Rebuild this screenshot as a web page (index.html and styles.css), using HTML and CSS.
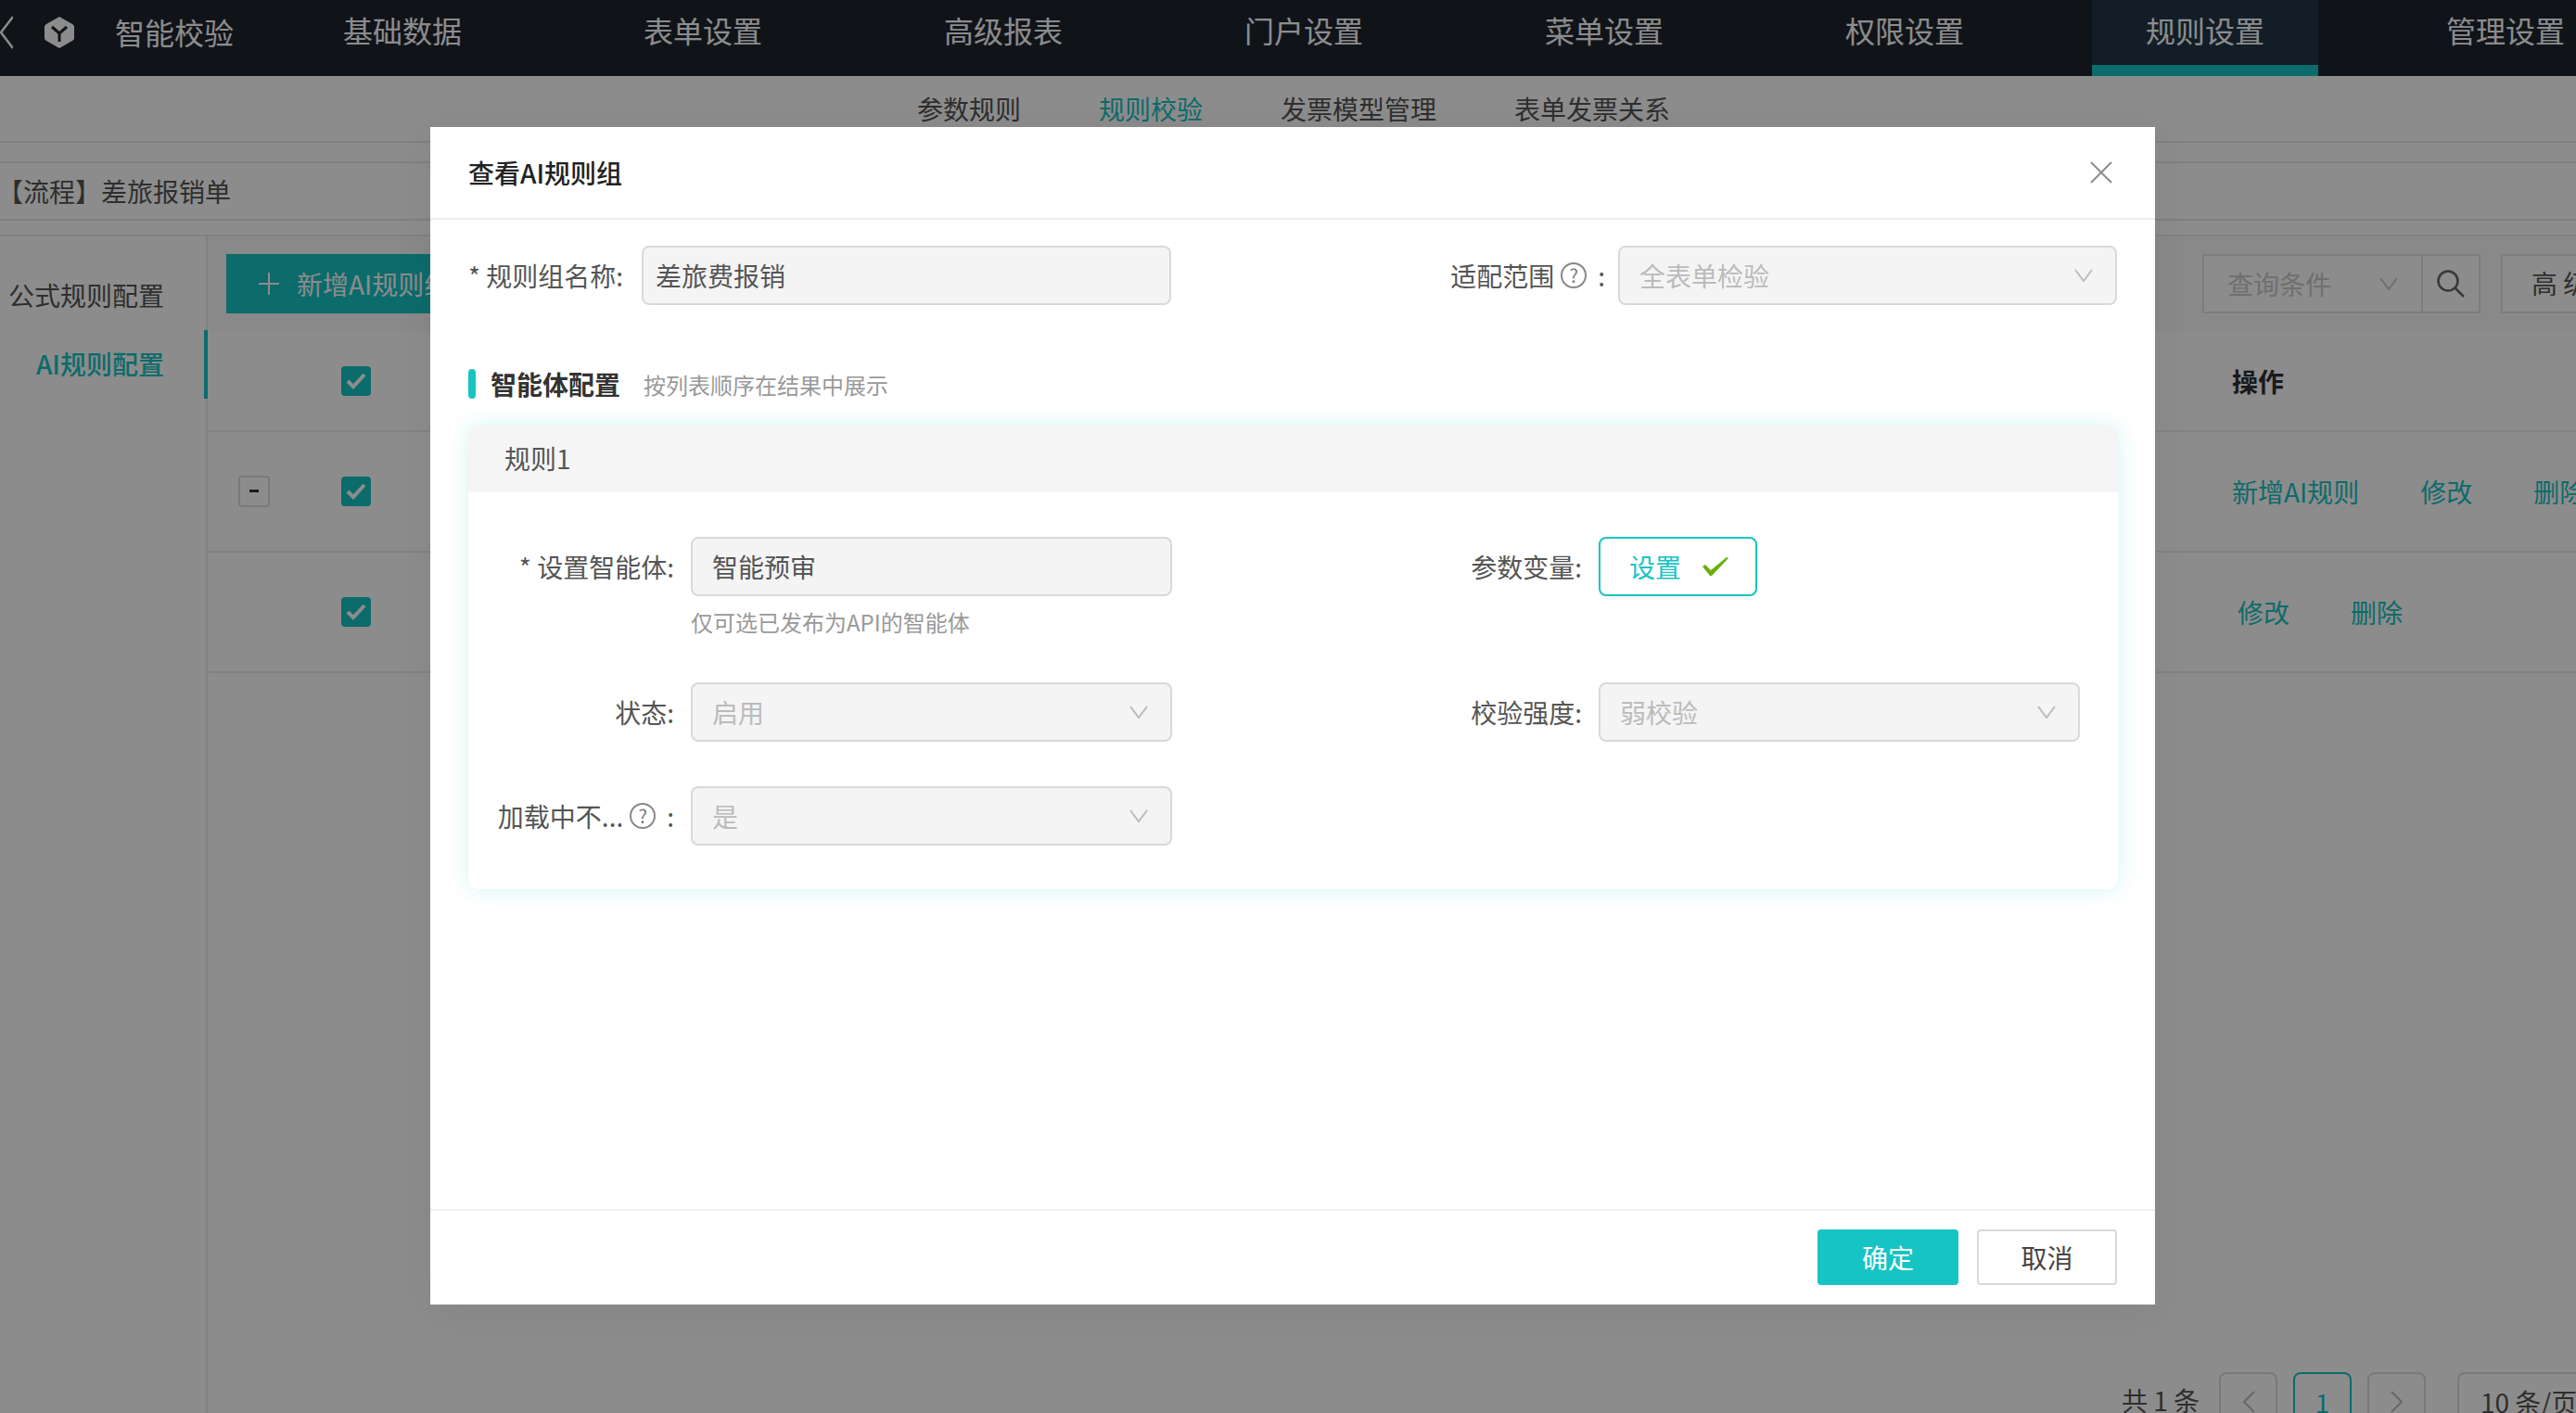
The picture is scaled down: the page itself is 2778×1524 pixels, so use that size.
FILE: index.html
```html
<!DOCTYPE html>
<html>
<head>
    <title>智能校验</title>
    <link rel="stylesheet" href="styles.css">
</head>
<body>
<div class="page">
    <div class="topbar">
        <svg class="back" width="14" height="36" viewBox="0 0 14 36"><polyline points="14,1 1,18 14,35" fill="none" stroke="#fff" stroke-width="2.5"/></svg>
        <svg class="cube" width="32" height="36" viewBox="0 0 32 36"><path d="M16 1 L30 9 Q32 10 32 12 V24 Q32 26 30 27 L16 35 L2 27 Q0 26 0 24 V12 Q0 10 2 9 Z" fill="#fff"/><path d="M8 12 L16 19 L24 12 M16 19 V28" fill="none" stroke="#1e252f" stroke-width="3"/></svg>
        <div class="brand">智能校验</div>
        <div class="nav">
            <div class="nav-item">基础数据</div>
            <div class="nav-item">表单设置</div>
            <div class="nav-item">高级报表</div>
            <div class="nav-item">门户设置</div>
            <div class="nav-item">菜单设置</div>
            <div class="nav-item">权限设置</div>
            <div class="nav-item active">规则设置</div>
            <div class="nav-item">管理设置</div>
        </div>
    </div>

    <div class="subnav">
        <div>参数规则</div>
        <div class="teal">规则校验</div>
        <div>发票模型管理</div>
        <div>表单发票关系</div>
    </div>

    <div class="titlebar"><span>【流程】差旅报销单</span></div>

    <div class="main">
        <div class="sidebar">
            <div class="side-item">公式规则配置</div>
            <div class="side-item active">AI规则配置</div>
        </div>
        <div class="content">
            <div class="toolbar">
                <div class="add-btn">
                    <svg width="22" height="24" viewBox="0 0 22 24"><path d="M11 0 V24 M0 12 H22" stroke="#fff" stroke-width="2"/></svg>
                    <span>新增AI规则组</span>
                </div>
                <div class="tool-right">
                    <div class="query">
                        <span>查询条件</span>
                        <svg width="20" height="14" viewBox="0 0 20 14"><polyline points="1,1 10,13 19,1" fill="none" stroke="#c8cccc" stroke-width="2"/></svg>
                    </div>
                    <div class="search-btn">
                        <svg width="30" height="30" viewBox="0 0 30 30"><circle cx="12" cy="12" r="10.5" fill="none" stroke="#666" stroke-width="2.5"/><path d="M19.5 19.5 L29 29" stroke="#666" stroke-width="2.5"/></svg>
                    </div>
                    <div class="adv-btn">高 级</div>
                </div>
            </div>

            <div class="row head">
                <div class="cell-expand"></div>
                <div class="check"><svg width="22" height="18" viewBox="0 0 22 18"><polyline points="2,9 8,15 20,2" fill="none" stroke="#fff" stroke-width="4"/></svg></div>
                <div class="ops"><b>操作</b></div>
            </div>
            <div class="row">
                <div class="cell-expand"><div class="minus"></div></div>
                <div class="check"><svg width="22" height="18" viewBox="0 0 22 18"><polyline points="2,9 8,15 20,2" fill="none" stroke="#fff" stroke-width="4"/></svg></div>
                <div class="ops teal">
                    <span>新增AI规则</span>
                    <span>修改</span>
                    <span>删除</span>
                </div>
            </div>
            <div class="row">
                <div class="cell-expand"></div>
                <div class="check"><svg width="22" height="18" viewBox="0 0 22 18"><polyline points="2,9 8,15 20,2" fill="none" stroke="#fff" stroke-width="4"/></svg></div>
                <div class="ops ops-short teal">
                    <span>修改</span>
                    <span>删除</span>
                </div>
            </div>

            <div class="pager">
                <span class="total">共 1 条</span>
                <div class="page-btn"><svg width="14" height="24" viewBox="0 0 14 24"><polyline points="13,1 2,12 13,23" fill="none" stroke="#bbb" stroke-width="2"/></svg></div>
                <div class="page-btn current">1</div>
                <div class="page-btn"><svg width="14" height="24" viewBox="0 0 14 24"><polyline points="1,1 12,12 1,23" fill="none" stroke="#bbb" stroke-width="2"/></svg></div>
                <div class="page-size">10 条/页</div>
            </div>
        </div>
    </div>

    <div class="overlay"></div>

    <div class="modal">
        <div class="modal-head">
            <div class="modal-title">查看AI规则组</div>
            <svg width="24" height="24" viewBox="0 0 24 24"><path d="M1 1 L23 23 M23 1 L1 23" stroke="#8c8c8c" stroke-width="2"/></svg>
        </div>
        <div class="modal-body">
            <div class="top-form">
                <div class="field">
                    <div class="label name-label">* 规则组名称:</div>
                    <div class="input name-input">差旅费报销</div>
                </div>
                <div class="field">
                    <div class="label scope-label">适配范围 <span class="help">?</span> <span class="colon">:</span></div>
                    <div class="input select scope-select">
                        <span>全表单检验</span>
                        <svg width="20" height="14" viewBox="0 0 20 14"><polyline points="1,1 10,13 19,1" fill="none" stroke="#bbb" stroke-width="2"/></svg>
                    </div>
                </div>
            </div>

            <div class="section">
                <div class="section-bar"></div>
                <div class="section-title">智能体配置</div>
                <div class="section-sub">按列表顺序在结果中展示</div>
            </div>

            <div class="card">
                <div class="card-head">规则1</div>
                <div class="card-form">
                    <div class="card-field">
                        <div class="label card-label">* 设置智能体:</div>
                        <div>
                            <div class="input card-input dark">智能预审</div>
                            <div class="hint">仅可选已发布为API的智能体</div>
                        </div>
                    </div>
                    <div class="card-field">
                        <div class="label card-label">参数变量:</div>
                        <div class="set-btn">
                            <span>设置</span>
                            <svg width="28" height="20" viewBox="0 0 28 20"><path d="M0 10 L3 8 L9 14 L26 0 L28 1 L10 20 L8 20 Z" fill="#6aaf0c"/></svg>
                        </div>
                    </div>
                    <div class="card-field">
                        <div class="label card-label">状态:</div>
                        <div class="input select card-input">
                            <span>启用</span>
                            <svg width="20" height="14" viewBox="0 0 20 14"><polyline points="1,1 10,13 19,1" fill="none" stroke="#bbb" stroke-width="2"/></svg>
                        </div>
                    </div>
                    <div class="card-field">
                        <div class="label card-label">校验强度:</div>
                        <div class="input select card-input">
                            <span>弱校验</span>
                            <svg width="20" height="14" viewBox="0 0 20 14"><polyline points="1,1 10,13 19,1" fill="none" stroke="#bbb" stroke-width="2"/></svg>
                        </div>
                    </div>
                    <div class="card-field">
                        <div class="label card-label">加载中不... <span class="help">?</span> <span class="colon">:</span></div>
                        <div class="input select card-input">
                            <span>是</span>
                            <svg width="20" height="14" viewBox="0 0 20 14"><polyline points="1,1 10,13 19,1" fill="none" stroke="#bbb" stroke-width="2"/></svg>
                        </div>
                    </div>
                </div>
            </div>
        </div>
        <div class="modal-foot">
            <div class="btn primary">确定</div>
            <div class="btn">取消</div>
        </div>
    </div>
</div>
</body>
</html>
```

FILE: styles.css
```css
* {
    box-sizing: border-box;
}

body {
    margin: 0;
    font-family: "Noto Sans CJK SC", "Noto Sans", sans-serif;
    font-size: 28px;
    color: #555;
}

.page {
    position: relative;
    width: 2778px;
    height: 1524px;
    overflow: hidden;
    background-color: #fff;
}

.teal {
    color: #17c4c4;
}

/* top bar */
.topbar {
    display: flex;
    align-items: flex-start;
    height: 82px;
    background-color: #1e252f;
    color: #fff;
    font-size: 32px;
}

.back {
    flex: none;
    margin-top: 17px;
}

.cube {
    flex: none;
    margin: 17px 44px 0 34px;
}

.brand {
    flex: none;
    width: 128px;
    line-height: 68px;
}

.nav {
    display: flex;
    flex: none;
    gap: 80px;
    margin-left: 60px;
}

.nav-item {
    width: 244px;
    height: 82px;
    line-height: 64px;
    text-align: center;
}

.nav-item.active {
    background-color: #213647;
    border-bottom: 12px solid #17c4c4;
}

.subnav {
    display: flex;
    justify-content: center;
    gap: 84px;
    height: 72px;
    padding-left: 12px;
    line-height: 70px;
    border-bottom: 2px solid #e5ebea;
}

.titlebar {
    height: 64px;
    margin-top: 20px;
    line-height: 60px;
    border-top: 2px solid #e5ebea;
    border-bottom: 2px solid #e5ebea;
}

.titlebar span {
    margin-left: -3px;
    display: block;
}

.main {
    display: flex;
    height: 1286px;
    margin-top: 15px;
    border-top: 2px solid #e5ebea;
}

.sidebar {
    flex: none;
    width: 224px;
    padding-top: 27px;
    border-right: 2px solid #e5ebea;
}

.side-item {
    position: relative;
    height: 74px;
    padding-right: 45px;
    line-height: 72px;
    text-align: right;
}

.side-item.active {
    color: #17c4c4;
    font-weight: 500;
}

.side-item.active::after {
    content: "";
    position: absolute;
    top: 0;
    right: -2px;
    width: 4px;
    height: 74px;
    background-color: #17c4c4;
}

.content {
    flex: 1;
    min-width: 0;
}

.toolbar {
    display: flex;
    height: 102px;
    padding-top: 19px;
    padding-left: 20px;
    background-color: #fafafa;
}

.add-btn {
    display: flex;
    align-items: center;
    gap: 19px;
    height: 64px;
    padding: 0 35px;
    background-color: #17c4c4;
    color: #fff;
}

.tool-right {
    display: flex;
    width: 403px;
    margin-left: auto;
    overflow: hidden;
}

.query {
    display: flex;
    flex: none;
    justify-content: space-between;
    align-items: center;
    width: 238px;
    height: 64px;
    padding: 0 25px;
    color: #c8cccc;
    background-color: #fff;
    border: 2px solid #dfe5e4;
}

.search-btn {
    display: flex;
    flex: none;
    justify-content: center;
    align-items: center;
    width: 62px;
    height: 64px;
    background-color: #fff;
    border: 2px solid #dfe5e4;
    border-left: none;
}

.adv-btn {
    flex: none;
    width: 140px;
    height: 64px;
    margin-left: 22px;
    padding-left: 31px;
    line-height: 58px;
    background-color: #fff;
    border: 2px solid #dfe5e4;
}

/* table rows */
.row {
    display: flex;
    align-items: center;
    height: 130px;
    border-bottom: 2px solid #eceeee;
}

.row.head {
    height: 109px;
}

.cell-expand {
    flex: none;
    width: 144px;
    padding-left: 33px;
}

.minus {
    position: relative;
    width: 34px;
    height: 34px;
    background-color: #fff;
    border: 2px solid #ddd;
    border-radius: 4px;
}

.minus::after {
    content: "";
    position: absolute;
    top: 13px;
    left: 10px;
    width: 10px;
    height: 3px;
    background-color: #333;
}

.check {
    display: flex;
    flex: none;
    justify-content: center;
    align-items: center;
    width: 32px;
    height: 32px;
    background-color: #17c4c4;
    border-radius: 4px;
}

.ops {
    display: flex;
    flex: none;
    gap: 66px;
    width: 371px;
    margin-left: auto;
    white-space: nowrap;
}

.ops b {
    color: #303133;
}

.ops-short {
    padding-left: 6px;
}

.pager {
    display: flex;
    margin-top: 754px;
    padding-left: 2064px;
    height: 64px;
}

.total {
    flex: none;
    width: 105px;
    line-height: 60px;
}

.page-btn {
    display: flex;
    flex: none;
    justify-content: center;
    align-items: center;
    width: 63px;
    height: 64px;
    margin-right: 17px;
    border: 2px solid #ddd;
    border-radius: 8px;
}

.page-btn.current {
    color: #17c4c4;
    border-color: #17c4c4;
}

.page-size {
    flex: none;
    width: 200px;
    height: 64px;
    margin-left: 17px;
    padding-left: 23px;
    line-height: 60px;
    border: 2px solid #ddd;
    border-radius: 8px;
}

.overlay {
    position: absolute;
    top: 0;
    left: 0;
    width: 100%;
    height: 100%;
    background-color: rgba(0, 0, 0, 0.45);
}

/* modal */
.modal {
    position: absolute;
    top: 137px;
    left: 464px;
    display: flex;
    flex-direction: column;
    width: 1860px;
    height: 1270px;
    background-color: #fff;
    box-shadow: 0 8px 40px rgba(0, 0, 0, 0.06);
}

.modal-head {
    display: flex;
    flex: none;
    justify-content: space-between;
    align-items: center;
    height: 100px;
    padding: 0 46px 0 41px;
    border-bottom: 2px solid #ededed;
}

.modal-title {
    color: #222;
    font-weight: 500;
}

.modal-body {
    flex: 1;
    padding: 28px 41px 0;
}

.top-form {
    display: flex;
    justify-content: space-between;
}

.field {
    display: flex;
    align-items: center;
}

.label {
    flex: none;
    line-height: 64px;
    white-space: nowrap;
}

.name-label {
    width: 187px;
}

.scope-label {
    display: flex;
    align-items: center;
    margin-right: 14px;
}

.help {
    display: inline-flex;
    justify-content: center;
    align-items: center;
    width: 28px;
    height: 28px;
    margin-left: 7px;
    font-size: 20px;
    line-height: 1;
    color: #777;
    border: 2px solid #888;
    border-radius: 50%;
}

.colon {
    margin-left: 12px;
}

.input {
    height: 64px;
    padding: 0 21px;
    line-height: 60px;
    background-color: #f4f4f4;
    border: 2px solid #d9d9d9;
    border-radius: 8px;
    color: #bbb;
}

.select {
    display: flex;
    justify-content: space-between;
    align-items: center;
    padding-right: 24px;
}

.name-input {
    width: 571px;
    padding: 0 13px;
    color: #555;
}

.scope-select {
    width: 538px;
}

.section {
    display: flex;
    align-items: center;
    height: 32px;
    margin-top: 69px;
}

.section-bar {
    width: 8px;
    height: 32px;
    background-color: #17c4c4;
    border-radius: 4px;
}

.section-title {
    margin-left: 16px;
    color: #333;
    font-weight: 700;
}

.section-sub {
    margin-left: 25px;
    font-size: 24px;
    color: #999;
}

.card {
    width: 1779px;
    height: 500px;
    margin-top: 29px;
    border-radius: 12px;
    box-shadow: 0 0 24px rgba(23, 196, 196, 0.18);
}

.card-head {
    height: 72px;
    padding-left: 39px;
    line-height: 70px;
    background-color: #f5f5f5;
    border-radius: 12px 12px 0 0;
}

.card-form {
    display: grid;
    grid-template-columns: 979px 1fr;
    row-gap: 48px;
    padding-top: 48px;
}

.card-field {
    display: flex;
    align-items: flex-start;
}

.card-label {
    display: flex;
    justify-content: flex-end;
    align-items: center;
    width: 222px;
    margin-right: 18px;
}

.card-input {
    width: 519px;
}

.dark {
    color: #555;
}

.hint {
    height: 45px;
    padding-top: 11px;
    font-size: 24px;
    line-height: 34px;
    color: #999;
}

.set-btn {
    display: flex;
    align-items: center;
    gap: 23px;
    width: 171px;
    height: 64px;
    padding-left: 31px;
    color: #17c4c4;
    border: 2px solid #17c4c4;
    border-radius: 8px;
    box-shadow: 0 4px 0 rgba(0, 0, 0, 0.02);
}

.modal-foot {
    display: flex;
    flex: none;
    justify-content: flex-end;
    gap: 20px;
    height: 103px;
    padding: 20px 41px 0 0;
    border-top: 2px solid #ededed;
}

.btn {
    width: 151px;
    height: 60px;
    line-height: 56px;
    text-align: center;
    color: #444;
    border: 2px solid #d9d9d9;
    border-radius: 4px;
}

.btn.primary {
    width: 152px;
    color: #fff;
    background-color: #17c4c4;
    border-color: #17c4c4;
}
```
